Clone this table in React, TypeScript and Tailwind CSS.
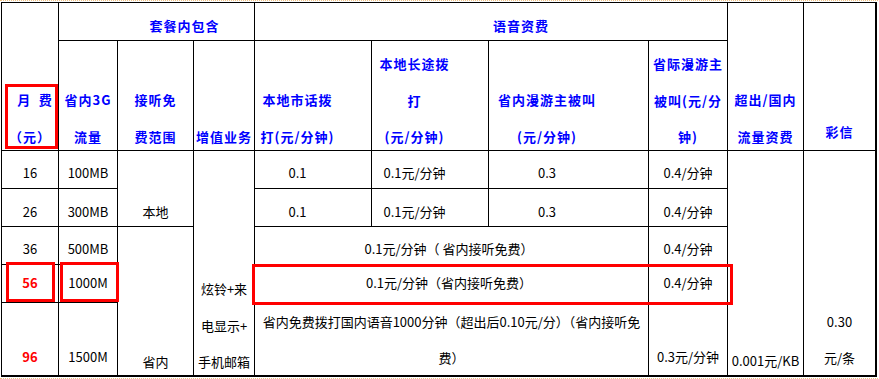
import React from 'react';

const head = 'text-[#0000ff] font-bold tracking-[1px]';

function Cell({ className = '', children }: { className?: string; children?: React.ReactNode }) {
  return (
    <div className={`border-r border-b border-black text-center whitespace-nowrap ${className}`}>
      {children}
    </div>
  );
}

const App = () => {
  return (
    <div className="relative w-[879px] h-[379px] bg-white font-['Noto_Sans_CJK_SC',sans-serif] text-[13px] text-black">
      <div className="w-[878px] border-y border-dotted border-[#f0c080] pl-px py-px">
        <div className="grid grid-cols-[57px_59px_76px_61px_117px_117px_160px_79px_76px_72px] grid-rows-[38px_110px_38px_38px_38px_38px_73px] w-[876px] border border-black">
          {/* header, first row */}
          <Cell className={`col-start-1 row-start-1 row-span-2 pt-[79px] leading-[36.5px] ${head}`}>
            <div>
              <span className="pl-[10px]">月{'\u2002'}费</span>
            </div>
            <div>（元）</div>
          </Cell>
          <Cell className={`col-start-2 col-span-3 row-start-1 pt-[5px] pl-[56px] leading-[36.5px] ${head}`}>
            套餐内包含
          </Cell>
          <Cell className={`col-start-5 col-span-4 row-start-1 pt-[5px] pl-[60px] leading-[36.5px] ${head}`}>
            语音资费
          </Cell>
          <Cell className={`col-start-9 row-start-1 row-span-2 pt-[79px] leading-[36.5px] ${head}`}>
            <div>超出/国内</div>
            <div>流量资费</div>
          </Cell>
          <Cell className={`col-start-10 row-start-1 row-span-2 pt-[111px] leading-[36.5px] ${head}`}>
            彩信
          </Cell>

          {/* header, second row */}
          <Cell className={`col-start-2 row-start-2 pt-[41px] leading-[36.5px] ${head}`}>
            <div>省内3G</div>
            <div>流量</div>
          </Cell>
          <Cell className={`col-start-3 row-start-2 pt-[41px] leading-[36.5px] ${head}`}>
            <div>接听免</div>
            <div>费范围</div>
          </Cell>
          <Cell className={`col-start-4 row-start-2 pt-[78px] leading-[36.5px] ${head}`}>
            增值业务
          </Cell>
          <Cell className={`col-start-5 row-start-2 pt-[41px] pr-[31px] leading-[36.5px] ${head}`}>
            <div>本地市话拨</div>
            <div>打(元/分钟)</div>
          </Cell>
          <Cell className={`col-start-6 row-start-2 pt-[5px] pr-[31px] leading-[36.5px] ${head}`}>
            <div>本地长途拨</div>
            <div>打</div>
            <div>(元/分钟)</div>
          </Cell>
          <Cell className={`col-start-7 row-start-2 pt-[41px] pr-[43px] leading-[36.5px] ${head}`}>
            <div>省内漫游主被叫</div>
            <div>(元/分钟)</div>
          </Cell>
          <Cell className={`col-start-8 row-start-2 pt-[5px] leading-[36.5px] ${head}`}>
            <div>省际漫游主</div>
            <div>被叫(元/分</div>
            <div>钟)</div>
          </Cell>

          {/* 16 */}
          <Cell className="col-start-1 row-start-3 pt-[4px] leading-[36px]">16</Cell>
          <Cell className="col-start-2 row-start-3 pt-[4px] leading-[36px]">100MB</Cell>
          <Cell className="col-start-3 row-start-3 row-span-2 pt-[43px] leading-[36px]">本地</Cell>
          <Cell className="col-start-4 row-start-3 row-span-5 pt-[120px] leading-[36.5px]">
            <div>炫铃+来</div>
            <div>电显示+</div>
            <div>手机邮箱</div>
          </Cell>
          <Cell className="col-start-5 row-start-3 pt-[4px] pr-[31px] leading-[36px]">0.1</Cell>
          <Cell className="col-start-6 row-start-3 pt-[4px] pr-[31px] leading-[36px]">0.1元/分钟</Cell>
          <Cell className="col-start-7 row-start-3 pt-[4px] pr-[43px] leading-[36px]">0.3</Cell>
          <Cell className="col-start-8 row-start-3 pt-[4px] leading-[36px]">0.4/分钟</Cell>
          <Cell className="col-start-9 row-start-3 row-span-5 pt-[192px] leading-[36px]">0.001元/KB</Cell>
          <Cell className="col-start-10 row-start-3 row-span-5 pt-[153px] leading-[35.5px]">
            <div>0.30</div>
            <div>元/条</div>
          </Cell>

          {/* 26 */}
          <Cell className="col-start-1 row-start-4 pt-[5px] leading-[36px]">26</Cell>
          <Cell className="col-start-2 row-start-4 pt-[5px] leading-[36px]">300MB</Cell>
          <Cell className="col-start-5 row-start-4 pt-[5px] pr-[31px] leading-[36px]">0.1</Cell>
          <Cell className="col-start-6 row-start-4 pt-[5px] pr-[31px] leading-[36px]">0.1元/分钟</Cell>
          <Cell className="col-start-7 row-start-4 pt-[5px] pr-[43px] leading-[36px]">0.3</Cell>
          <Cell className="col-start-8 row-start-4 pt-[5px] leading-[36px]">0.4/分钟</Cell>

          {/* 36 */}
          <Cell className="col-start-1 row-start-5 pt-[4px] leading-[36px]">36</Cell>
          <Cell className="col-start-2 row-start-5 pt-[4px] leading-[36px]">500MB</Cell>
          <Cell className="col-start-3 row-start-5 row-span-3 pt-[117px] leading-[36px]">省内</Cell>
          <Cell className="col-start-5 col-span-3 row-start-5 pt-[4px] pr-[5px] leading-[36px]">
            0.1元/分钟（ 省内接听免费）
          </Cell>
          <Cell className="col-start-8 row-start-5 pt-[4px] leading-[36px]">0.4/分钟</Cell>

          {/* 56 */}
          <Cell className="col-start-1 row-start-6 pt-0 leading-[36px] font-bold text-[#ff0000]">56</Cell>
          <Cell className="col-start-2 row-start-6 pt-0 leading-[36px]">1000M</Cell>
          <Cell className="col-start-5 col-span-3 row-start-6 pt-0 pr-[5px] leading-[36px]">
            0.1元/分钟（省内接听免费）
          </Cell>
          <Cell className="col-start-8 row-start-6 pt-0 leading-[36px]">0.4/分钟</Cell>

          {/* 96 */}
          <Cell className="col-start-1 row-start-7 pt-[36px] leading-[36px] font-bold text-[#ff0000]">96</Cell>
          <Cell className="col-start-2 row-start-7 pt-[36px] leading-[36px]">1500M</Cell>
          <Cell className="col-start-5 col-span-3 row-start-7 pt-[1px] leading-[35.5px]">
            <div>省内免费拨打国内语音1000分钟（超出后0.10元/分）（省内接听免</div>
            <div>费）</div>
          </Cell>
          <Cell className="col-start-8 row-start-7 pt-[36px] leading-[36px]">0.3元/分钟</Cell>
        </div>
      </div>

      {/* red highlight frames */}
      <div className="absolute left-[5px] top-[84px] w-[53px] h-[65px] border-[3px] border-[#ff0000]" />
      <div className="absolute left-[6px] top-[262px] w-[49px] h-[40px] border-[3px] border-[#ff0000]" />
      <div className="absolute left-[60px] top-[262px] w-[59px] h-[40px] border-[3px] border-[#ff0000]" />
      <div className="absolute left-[252px] top-[264px] w-[481px] h-[41px] border-[3px] border-[#ff0000]" />
    </div>
  );
};

export default App;
